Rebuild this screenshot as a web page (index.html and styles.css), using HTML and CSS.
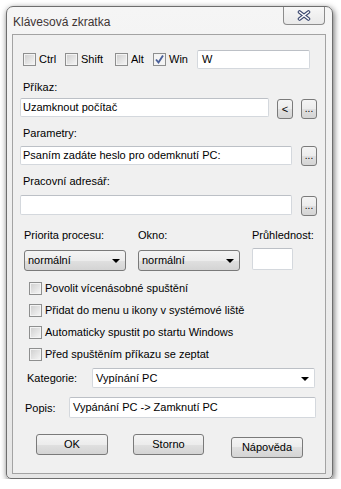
FILE: index.html
```html
<!DOCTYPE html>
<html lang="cs">
<head>
  <meta charset="UTF-8">
  <title>Klávesová zkratka</title>
  <link rel="stylesheet" href="styles.css">
</head>
<body>
  <div class="window">
    <div class="titlebar">
      <span class="title">Klávesová zkratka</span>
      <button class="close" type="button">
        <svg width="14" height="11" viewBox="0 0 14 11">
          <path d="M2.5 2 L11.5 9 M11.5 2 L2.5 9" stroke="#3d4a72" stroke-width="3.6" stroke-linecap="round" fill="none"/>
          <path d="M2.5 2 L11.5 9 M11.5 2 L2.5 9" stroke="#fff" stroke-width="1.5" stroke-linecap="round" fill="none"/>
        </svg>
      </button>
    </div>

    <div class="client">
      <!-- modifier keys -->
      <div class="keys">
        <label class="key key-ctrl"><span class="cb"></span>Ctrl</label>
        <label class="key key-shift"><span class="cb"></span>Shift</label>
        <label class="key key-alt"><span class="cb"></span>Alt</label>
        <label class="key key-win"><span class="cb checked"></span>Win</label>
        <div class="field key-input">W</div>
      </div>

      <div class="caption cap-cmd">Příkaz:</div>
      <div class="row row-cmd">
        <div class="field w-cmd">Uzamknout počítač</div>
        <button class="mini lt" type="button">&lt;</button>
        <button class="mini" type="button">...</button>
      </div>

      <div class="caption cap-params">Parametry:</div>
      <div class="row row-params">
        <div class="field w-long">Psaním zadáte heslo pro odemknutí PC:</div>
        <button class="mini" type="button">...</button>
      </div>

      <div class="caption cap-dir">Pracovní adresář:</div>
      <div class="row row-dir">
        <div class="field w-long tall"></div>
        <button class="mini" type="button">...</button>
      </div>

      <div class="labels">
        <span class="lbl-prio">Priorita procesu:</span>
        <span class="lbl-win">Okno:</span>
        <span>Průhlednost:</span>
      </div>
      <div class="selects">
        <div class="combo combo-prio">normální<span class="arrow"></span></div>
        <div class="combo combo-win">normální<span class="arrow"></span></div>
        <div class="field opacity"></div>
      </div>

      <div class="checks">
        <label class="check"><span class="cb"></span>Povolit vícenásobné spuštění</label>
        <label class="check"><span class="cb"></span>Přidat do menu u ikony v systémové liště</label>
        <label class="check"><span class="cb"></span>Automaticky spustit po startu Windows</label>
        <label class="check"><span class="cb"></span>Před spuštěním příkazu se zeptat</label>
      </div>

      <div class="line line-cat">
        <span class="lbl-cat">Kategorie:</span>
        <div class="field combo-cat">Vypínání PC<span class="arrow"></span></div>
      </div>

      <div class="line line-desc">
        <span class="lbl-desc">Popis:</span>
        <div class="field desc">Vypánání PC -&gt; Zamknutí PC</div>
      </div>

      <div class="actions">
        <button class="btn btn-ok" type="button">OK</button>
        <button class="btn btn-cancel" type="button">Storno</button>
        <button class="btn btn-help" type="button">Nápověda</button>
      </div>
    </div>
  </div>
</body>
</html>
```

FILE: styles.css
```css
* {
  box-sizing: border-box;
  margin: 0;
  padding: 0;
}

body {
  background: #fff;
  font-family: "Liberation Sans", Arial, sans-serif;
  font-size: 11px;
  color: #000;
  padding: 6px 0 0 6px;
}

button {
  font-family: inherit;
  font-size: 11px;
  font-weight: normal;
  color: #000;
}

/* window frame */
.window {
  width: 327px;
  height: 473px;
  border: 1px solid #6e6e6e;
  border-radius: 7px 7px 5px 5px;
  background: linear-gradient(#f5f5f5, #e6e6e6);
  box-shadow: 1px 2px 6px rgba(0, 0, 0, 0.6);
  padding: 0 6px 4px 5px;
  display: flex;
  flex-direction: column;
}

.titlebar {
  height: 27px;
  display: flex;
  justify-content: space-between;
  align-items: flex-start;
}

.title {
  font-size: 12px;
  line-height: 14px;
  margin: 8px 0 0 1px;
  color: #3e3434;
}

.close {
  width: 42px;
  height: 18px;
  margin-right: 1px;
  border: 1px solid #8c8c8c;
  border-top: none;
  border-radius: 0 0 4px 4px;
  background: linear-gradient(#f7f7f7, #e9e9e9);
  display: flex;
  align-items: center;
  justify-content: center;
  padding-bottom: 1px;
}

.client {
  height: 440px;
  border: 1px solid #a3a3a3;
  background: #f0f0f0;
  padding: 15px 8px 0 7px;
}

/* common controls */
.field {
  height: 19px;
  background: #fff;
  border: 1px solid #d4d8dd;
  border-top-color: #bcc0c6;
  border-radius: 2px;
  padding-left: 2px;
  line-height: 17px;
  white-space: nowrap;
  position: relative;
}

.cb {
  width: 13px;
  height: 13px;
  flex: none;
  border: 1px solid #8e8f8f;
  background: linear-gradient(135deg, #cdcdcd, #f7f7f7);
  box-shadow: inset 0 0 0 1px #f3f3f3;
}

.cb.checked {
  background: #f4f4f4 url("data:image/svg+xml,%3Csvg xmlns='http://www.w3.org/2000/svg' width='11' height='11'%3E%3Cpath d='M2 5.5 L4.5 8.5 L9 1.5' stroke='%234a609a' stroke-width='1.9' fill='none'/%3E%3C/svg%3E") center / 11px 11px no-repeat;
}

.mini {
  width: 16px;
  height: 20px;
  margin-left: 8px;
  margin-top: 1px;
  border: 1px solid #7a7a7a;
  border-radius: 3px;
  background: linear-gradient(#f4f4f4, #ececec 50%, #e0e0e0 50%, #d4d4d4);
  line-height: 18px;
  font-size: 10px;
}

.mini.lt {
  font-size: 11px;
}

.caption {
  line-height: 14px;
  padding-left: 3px;
}

.row {
  display: flex;
  align-items: flex-start;
}

/* first line: modifiers */
.keys {
  height: 19px;
  display: flex;
  align-items: center;
  padding-left: 3px;
}

.key {
  display: flex;
  align-items: center;
  gap: 3px;
  line-height: 13px;
}

.key-ctrl { width: 42px; }
.key-shift { width: 50px; }
.key-alt { width: 38px; }
.key-win { width: 44px; }

.key-input {
  width: 113px;
  padding-left: 4px;
}

.cap-cmd { margin-top: 11px; }
.row-cmd { margin-top: 4px; }
.w-cmd { width: 249px; }

.cap-params { margin-top: 7px; }
.row-params { margin-top: 6px; }
.row-params .mini { margin-top: 0; margin-left: 9px; }
.w-long { width: 272px; }

.cap-dir { margin-top: 8px; }
.row-dir { margin-top: 7px; }
.row-dir .mini { margin-left: 9px; }
.tall { height: 20px; }

/* priority / window / opacity */
.labels {
  margin-top: 12px;
  display: flex;
  line-height: 14px;
  padding-left: 4px;
}

.lbl-prio,
.lbl-win {
  width: 114px;
}

.selects {
  margin-top: 6px;
  display: flex;
  align-items: flex-start;
  padding-left: 4px;
}

.combo {
  width: 102px;
  height: 21px;
  margin-top: 2px;
  border: 1px solid #7a7a7a;
  border-radius: 3px;
  background: linear-gradient(#f4f4f4, #ececec 50%, #e0e0e0 50%, #d4d4d4);
  padding-left: 3px;
  line-height: 19px;
  position: relative;
}

.combo-win {
  margin-left: 12px;
}

.arrow {
  position: absolute;
  right: 5px;
  top: 8px;
  border-left: 4px solid transparent;
  border-right: 4px solid transparent;
  border-top: 4px solid #000;
}

.opacity {
  width: 41px;
  height: 22px;
  margin-left: 12px;
}

/* options */
.checks {
  margin-top: 11px;
  padding-left: 9px;
  display: flex;
  flex-direction: column;
  gap: 9px;
}

.check {
  display: flex;
  align-items: center;
  gap: 3px;
  height: 13px;
  line-height: 13px;
}

.line {
  display: flex;
  align-items: center;
}

.line-cat {
  margin-top: 7px;
  padding-left: 7px;
}

.lbl-cat {
  width: 65px;
}

.combo-cat {
  width: 223px;
  height: 20px;
  line-height: 18px;
  padding-left: 3px;
}

.combo-cat .arrow {
  right: 5px;
  top: 8px;
}

.line-desc {
  margin-top: 9px;
  padding-left: 5px;
}

.lbl-desc {
  width: 44px;
}

.desc {
  width: 247px;
  height: 21px;
  line-height: 19px;
  padding-left: 3px;
}

/* dialog buttons */
.actions {
  margin-top: 16px;
  display: flex;
  align-items: flex-start;
  padding-left: 16px;
}

.btn {
  width: 72px;
  height: 21px;
  border: 1px solid #7a7a7a;
  border-radius: 3px;
  background: linear-gradient(#f4f4f4, #ececec 50%, #e0e0e0 50%, #d4d4d4);
  line-height: 19px;
}

.btn-cancel {
  width: 71px;
  margin-left: 25px;
}

.btn-help {
  margin-left: 27px;
  margin-top: 3px;
}
```
